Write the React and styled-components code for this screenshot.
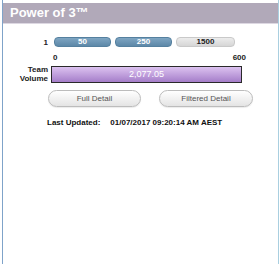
import React from 'react';
import styled, { createGlobalStyle } from 'styled-components';

const GlobalStyle = createGlobalStyle`
  body {
    margin: 0;
    background: #ffffff;
    font-family: "Liberation Sans", Arial, sans-serif;
  }
`;

const Panel = styled.div`
  margin-left: 2px;
  width: 275px;
  height: 261px;
  padding-top: 3px;
  border-left: 1px solid #7fa3c9;
  border-right: 1px solid #a9cfe0;
`;

const Header = styled.div`
  height: 20px;
  background: #b1a9b9;
  border-bottom: 1px solid #ddd8e2;
  color: #ffffff;
  font-weight: bold;
  font-size: 13px;
  line-height: 20px;
  padding-left: 7px;
`;

const Body = styled.div`
  padding-top: 13px;
  font-size: 8px;
  font-weight: bold;
  color: #222;
`;

const Row = styled.div`
  display: flex;
  align-items: center;
  margin-top: ${p => p.$top || 0}px;
`;

const Label = styled.div`
  width: 45px;
  text-align: right;
  line-height: 9px;
  flex-shrink: 0;
`;

const Pills = styled.div`
  display: flex;
  gap: 4px;
  margin-left: 6px;
`;

const Pill = styled.div`
  width: ${p => p.$w}px;
  height: 8px;
  border-radius: 4px;
  border: 1px solid ${p => (p.$on ? '#55809f' : '#c9c9c9')};
  background: ${p =>
    p.$on
      ? 'linear-gradient(#7ea5c2, #5d88a8)'
      : 'linear-gradient(#ececec, #d6d6d6)'};
  color: ${p => (p.$on ? '#ffffff' : '#222')};
  font-size: 8px;
  line-height: 8px;
  text-align: center;
`;

const Scale = styled.div`
  margin-left: 50px;
  width: 193px;
  display: flex;
  justify-content: space-between;
  line-height: 9px;
`;

const VolumeBar = styled.div`
  margin-left: 3px;
  width: 189px;
  height: 15px;
  border: 1px solid #2a2a2a;
  background: linear-gradient(#dcc2f0, #a57ec9);
  color: #ffffff;
  font-weight: normal;
  font-size: 9px;
  line-height: 15px;
  text-align: center;
`;

const Buttons = styled.div`
  display: flex;
  gap: 18px;
  margin: 7px 0 0 45px;
`;

const Button = styled.div`
  width: ${p => p.$w}px;
  height: 15px;
  border: 1px solid #bcbcbc;
  border-radius: 9px;
  background: linear-gradient(#ffffff, #e4e4e4);
  color: #555;
  font-weight: normal;
  font-size: 8px;
  line-height: 15px;
  text-align: center;
  box-shadow: 0 1px 1px rgba(0, 0, 0, 0.08);
`;

const Updated = styled.div`
  display: flex;
  margin: 11px 0 0 44px;
  line-height: 10px;
  font-size: 8px;
  color: #111;
`;

const UpdatedValue = styled.span`
  margin-left: 10px;
`;

const App = () => (
  <>
    <GlobalStyle />
    <Panel>
      <Header>Power of 3™</Header>
      <Body>
        <Row>
          <Label>1</Label>
          <Pills>
            <Pill $w={55} $on>50</Pill>
            <Pill $w={55} $on>250</Pill>
            <Pill $w={57}>1500</Pill>
          </Pills>
        </Row>
        <Row $top={6}>
          <Scale>
            <span>0</span>
            <span>600</span>
          </Scale>
        </Row>
        <Row $top={3}>
          <Label>
            Team
            <br />
            Volume
          </Label>
          <VolumeBar>2,077.05</VolumeBar>
        </Row>
        <Buttons>
          <Button $w={91}>Full Detail</Button>
          <Button $w={92}>Filtered Detail</Button>
        </Buttons>
        <Updated>
          <span>Last Updated:</span>
          <UpdatedValue>01/07/2017 09:20:14 AM AEST</UpdatedValue>
        </Updated>
      </Body>
    </Panel>
  </>
);

export default App;
